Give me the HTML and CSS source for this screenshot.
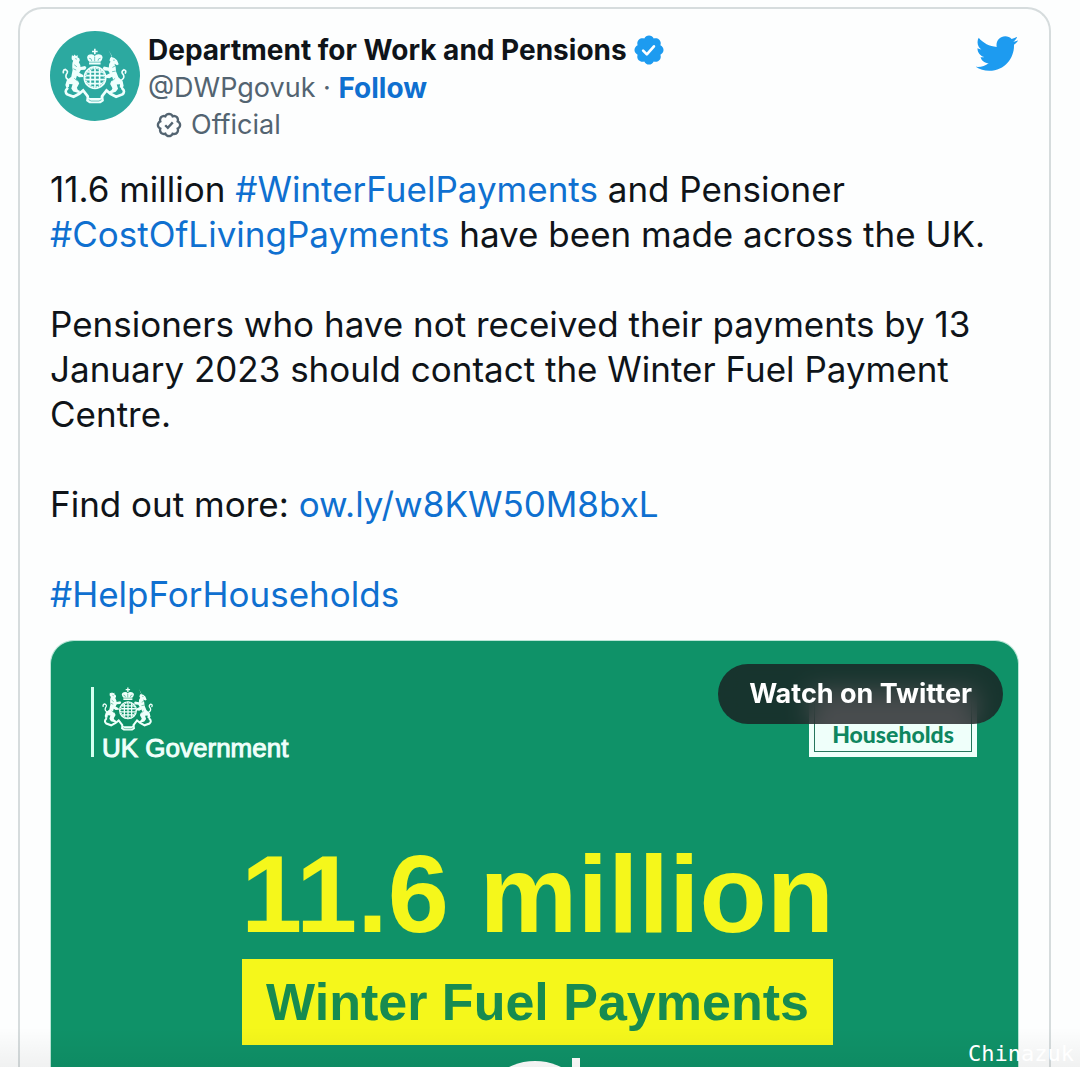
FILE: index.html
```html
<!DOCTYPE html>
<html lang="en">
<head>
<meta charset="utf-8">
<meta name="viewport" content="width=device-width, initial-scale=1">
<title>Department for Work and Pensions on Twitter</title>
<link rel="stylesheet" href="styles.css">
</head>
<body>
<svg class="sprite" aria-hidden="true">
  <symbol id="crest" viewBox="64 82 200 170">
    <g fill="currentColor">
      <path d="M161 84h5v6h6v5h-6v6h-5v-6h-6v-5h6z"/>
      <path d="M140 111q1-10 13-10 7 0 10 5 4-5 11-5 12 0 13 10-1 8-6 12v9h-35v-9q-5-4-6-12z"/>
      <path d="M94 104l5 2 3-4 4 4 6-2-1 6q7 2 7 9l-3 6q5 7 5 15l14-3 4 5-4 6-13 1-5 8 12 7 1 6-13 1-7-5-3 11q9 5 10 13l-7 13q1 8 9 9l-1 7-19-5-6-9 4-13-10-1-1 9-8 3-3-9 4-13 14-12 4-20q-3-20 2-28-6-5-5-9z"/>
      <path d="M205 88l11 22 7 2 8 7 5 12-5 3-8-4q6 11 5 23l7 18 13 12 3 14-5 8-7-4 1-9-10 1 4 13-7 9-18 6-2-7q9-2 10-10l-7-13q1-8 9-13l-3-9-8 5-13-2 2-7 12-6-5-8-12-1-5-6 4-6 15 3q-1-11 5-17l-3-4 2-8 6-5z"/>
      <path d="M139 226l9 8h31l10-8 2 17-10 7h-34l-10-7z"/>
    </g>
    <g fill="none" stroke="currentColor" stroke-width="5" stroke-linecap="round">
      <path d="M87 180q-15-5-10-18 8-10-3-15-8 2-6 10M238 182q18-6 12-19-9-9 2-15 8 2 4 10"/>
      <path d="M80 205q-10 9 0 18l19 7 17-9 12-10 14 18M247 205q10 9 0 18l-19 7-17-9-12-10-14 18" stroke-width="8"/>
      <circle cx="164" cy="172" r="31" stroke-width="8"/>
      <path d="M142 155h44M139 166h50M139 178h50M143 190h42M150 148v51M164 141v63M178 148v51" stroke-width="5"/>
    </g>
    <g class="crest-detail" fill="none" stroke-width="2">
      <path d="M146 113q8 0 8 8M181 113q-8 0-8 8M143 125h40M163 108v14M145 239l7 4h24l8-4"/>
      <path d="M101 133l8 6M98 145l9 4M104 114l5 2M226 136l-9 5M227 152l-11 2M219 119h5M101 174l10 8M225 174l-9 8"/>
      <circle cx="164" cy="172" r="29" stroke-dasharray="4 4"/>
    </g>
  </symbol>
  <symbol id="scallop" viewBox="0 0 22 22">
    <path d="M20.396 11c-.018-.646-.215-1.275-.57-1.816-.354-.54-.852-.972-1.438-1.246.223-.607.27-1.264.14-1.897-.131-.634-.437-1.218-.882-1.687-.47-.445-1.053-.75-1.687-.882-.633-.13-1.29-.083-1.897.14-.273-.587-.704-1.086-1.245-1.44S11.647 1.62 11 1.604c-.646.017-1.273.213-1.813.568s-.969.854-1.24 1.44c-.608-.223-1.267-.272-1.902-.14-.635.13-1.22.436-1.69.882-.445.47-.749 1.055-.878 1.688-.13.633-.08 1.29.144 1.896-.587.274-1.087.705-1.443 1.245-.356.54-.555 1.17-.574 1.817.02.647.218 1.276.574 1.817.356.54.856.972 1.443 1.245-.224.606-.274 1.263-.144 1.896.13.634.433 1.218.877 1.688.47.443 1.054.747 1.687.878.633.132 1.29.084 1.897-.136.274.586.705 1.084 1.246 1.439.54.354 1.17.551 1.816.569.647-.016 1.276-.213 1.817-.567s.972-.854 1.245-1.44c.604.239 1.266.296 1.903.164.636-.132 1.22-.447 1.68-.907.46-.46.776-1.044.908-1.681s.075-1.299-.165-1.903c.586-.274 1.084-.705 1.439-1.246.354-.54.551-1.17.569-1.816z"/>
  </symbol>
</svg>

<article class="tweet">
  <header class="tweet-header">
    <span class="avatar"><svg><use href="#crest"/></svg></span>
    <div class="author">
      <div class="author-line name">Department for Work and Pensions
        <svg class="verified" viewBox="0 0 22 22" role="img" aria-label="Verified account">
          <use href="#scallop" fill="#1d9bf0"/>
          <path d="M7.2 11.4l2.4 2.4 4.6-5.2" fill="none" stroke="#fff" stroke-width="1.7" stroke-linecap="round" stroke-linejoin="round"/>
        </svg>
      </div>
      <div class="author-line handle">@DWPgovuk · <a class="follow" href="#follow">Follow</a></div>
      <div class="author-line official">
        <svg class="official-icon" viewBox="0 0 22 22" aria-hidden="true">
          <use href="#scallop" fill="none" stroke="#536471" stroke-width="2"/>
          <path d="M7.8 11.2l2.2 2.2 4.2-4.6" fill="none" stroke="#536471" stroke-width="2"/>
        </svg>Official
      </div>
    </div>
    <a class="bird" href="#twitter" aria-label="View on Twitter">
      <svg viewBox="0 0 24 24"><path fill="#1d9bf0" d="M23.643 4.937c-.835.37-1.732.62-2.675.733.962-.576 1.7-1.49 2.048-2.578-.9.534-1.897.922-2.958 1.13-.85-.904-2.06-1.47-3.4-1.47-2.572 0-4.658 2.086-4.658 4.66 0 .364.042.718.12 1.06-3.873-.195-7.304-2.05-9.602-4.868-.4.69-.63 1.49-.63 2.342 0 1.616.823 3.043 2.072 3.878-.764-.025-1.482-.234-2.11-.583v.06c0 2.257 1.605 4.14 3.737 4.568-.392.106-.803.162-1.227.162-.3 0-.593-.028-.877-.082.593 1.85 2.313 3.198 4.352 3.234-1.595 1.25-3.604 1.995-5.786 1.995-.376 0-.747-.022-1.112-.065 2.062 1.323 4.51 2.093 7.14 2.093 8.57 0 13.255-7.098 13.255-13.254 0-.2-.005-.402-.014-.602.91-.658 1.7-1.477 2.323-2.41z"/></svg>
    </a>
  </header>

  <div class="tweet-text">
    <p>11.6 million <a href="#winter">#WinterFuelPayments</a> and Pensioner <a href="#cost">#CostOfLivingPayments</a> have been made across the UK.</p>
    <p>Pensioners who have not received their payments by 13 January 2023 should contact the Winter Fuel Payment Centre.</p>
    <p>Find out more: <a href="#more">ow.ly/w8KW50M8bxL</a></p>
    <p><a href="#help">#HelpForHouseholds</a></p>
  </div>

  <section class="media">
    <div class="media-top">
      <div class="gov-logo">
        <svg class="gov-crest" aria-hidden="true"><use href="#crest"/></svg>
        <span>UK Government</span>
      </div>
      <div class="households"><div class="households-inner">Households</div></div>
    </div>
    <div class="headline">
      <strong class="figure">11.6 million</strong>
      <strong class="banner">Winter Fuel Payments</strong>
      <svg class="next-line" viewBox="0 0 120 120" aria-hidden="true"><circle cx="57" cy="62" r="59" fill="#fff"/><path d="M94 0h8v60h-8z" fill="#fff"/></svg>
    </div>
    <button class="watch" type="button">Watch on Twitter</button>
  </section>
</article>
<div class="watermark">Chinazuk</div>
</body>
</html>
```
FILE: styles.css
```css
* { box-sizing: border-box; }

body {
  margin: 0;
  height: 100vh;
  overflow: hidden;
  position: relative;
  display: flex;
  background: #fdfefe;
  color: #0f1419;
  font-family: Inter, "Liberation Sans", sans-serif;
}

body::after {
  content: "";
  position: absolute;
  inset: auto 0 0;
  height: 40px;
  background: linear-gradient(transparent, rgba(0, 0, 0, 0.05));
}

a { color: #0f70d0; text-decoration: none; }
p { margin: 0; }

.sprite { position: absolute; width: 0; height: 0; }

.tweet {
  flex: 1;
  display: flex;
  flex-direction: column;
  min-width: 0;
  margin: 7px 29px 0 18px;
  padding: 22px 30px 0 30px;
  border: 2px solid #d6dcdd;
  border-bottom: 0;
  border-radius: 24px 24px 0 0;
}

.tweet-header { display: flex; align-items: flex-start; gap: 8px; }

.avatar {
  --detail: #2ca9a0;
  display: grid;
  place-items: center;
  width: 90px;
  height: 90px;
  border-radius: 50%;
  background: #2ca9a0;
  color: #effffd;
}
.avatar svg { width: 66px; height: 56px; }
.crest-detail { stroke: var(--detail); }

.author { flex: 1; }
.author-line {
  display: flex;
  align-items: center;
  height: 38px;
  font-size: 27px;
  line-height: 38px;
  white-space: pre;
  color: #536471;
}
.name { font-size: 28px; font-weight: 700; color: #0f1419; white-space: nowrap; gap: 5px; }
.follow { font-size: 28px; font-weight: 700; }
.verified { width: 34px; height: 34px; }
.official { height: 36px; padding-left: 8px; gap: 9px; white-space: nowrap; }
.official-icon { width: 26px; height: 26px; overflow: visible; }

.bird { width: 45px; height: 45px; }
.bird svg { display: block; }

.tweet-text {
  display: flex;
  flex-direction: column;
  gap: 45px;
  margin-top: 24px;
  font-size: 35px;
  line-height: 45px;
}

.media {
  --detail: #0f9268;
  flex: 1;
  min-height: 0;
  position: relative;
  overflow: hidden;
  margin-top: 23px;
  padding: 46px 41px 0 40px;
  border: 1px solid #b9e5d6;
  border-bottom: 0;
  border-radius: 24px 24px 0 0;
  background: #0f9268;
  color: #effffa;
}

.media-top { display: flex; justify-content: space-between; align-items: flex-end; height: 70px; }

.gov-logo {
  display: flex;
  flex-direction: column;
  height: 70px;
  padding-left: 8px;
  border-left: 3px solid #d5fff0;
  font: 26px/34px "Liberation Sans", Arial, sans-serif;
  -webkit-text-stroke: 1px;
}
.gov-crest { flex: none; width: 52px; height: 44px; }

.households { width: 168px; padding: 5px; background: #effffa; }
.households-inner {
  border: 1px solid #26755c;
  padding: 26px 0 4px;
  text-align: center;
  font: 900 23px/26px Lato, sans-serif;
  color: #0f8660;
}

.headline { display: flex; flex-direction: column; align-items: center; margin-top: 82px; padding-left: 7px; }
.figure {
  font: 700 110px/110px "Liberation Sans", Arial, sans-serif;
  color: #f5f71b;
}
.banner {
  margin-top: 10px;
  padding: 0 24px;
  font: 700 52px/86px "Liberation Sans", Arial, sans-serif;
  color: #178b50;
  background: #f5f71b;
}
.next-line { width: 120px; height: 120px; margin-top: 13px; flex: none; }

.watch {
  position: absolute;
  top: 23px;
  right: 15px;
  height: 60px;
  padding: 0 31px;
  border: 0;
  border-radius: 30px;
  background: rgba(25, 25, 30, 0.78);
  backdrop-filter: blur(12px);
  color: #fff;
  font: 700 27px/60px Inter, sans-serif;
}

.watermark {
  position: absolute;
  z-index: 1;
  right: 6px;
  bottom: 0;
  font: 22px/26px "DejaVu Sans Mono", monospace;
  color: #fff;
}
```
